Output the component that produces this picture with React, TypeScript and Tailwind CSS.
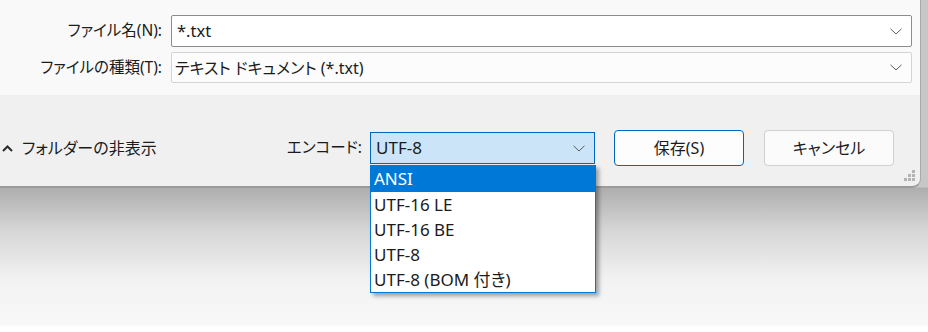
const font = "font-['Noto_Sans','Noto_Sans_CJK_JP',sans-serif] [font-feature-settings:'palt']"

const Chevron = ({ className = "" }: { className?: string }) => (
  <svg width="12" height="7" viewBox="0 0 12 7" className={className}>
    <path d="M0.5 0.8 L6 6 L11.5 0.8" fill="none" stroke="#5c5c5c" strokeWidth="1" />
  </svg>
)

const encodings = ["ANSI", "UTF-16 LE", "UTF-16 BE", "UTF-8", "UTF-8 (BOM 付き)"]

export default function App() {
  return (
    <div
      className={`${font} relative w-[928px] h-[332px] overflow-hidden text-[15.5px] text-[#1b1b1b] bg-[linear-gradient(to_bottom,#c7c7c7_0px,#c7c7c7_187px,#aeaeae_188px,#d6d6d6_230px,#f2f2f2_280px,#f8f8f8_325px,#ffffff_326px)]`}
    >
      <div className="relative w-[921px] h-[188px] flex flex-col bg-[#f0f0f0] border-r border-b-2 border-r-[#a9a9a9] border-b-[#9b9b9b] rounded-br-[9px] overflow-hidden">
        {/* file name / type */}
        <div className="h-[95px] bg-[#f9f9f9] flex flex-col pt-[15px] gap-[5px]">
          <div className="flex items-center">
            <div className="w-[171px] pr-[9px] text-right leading-none whitespace-nowrap">ファイル名(N):</div>
            <div className="w-[741px] h-[32px] bg-white border border-[#8c8c8c] rounded-[2px] flex items-center justify-between pl-[5px] pr-[9px]">
              <span className="text-[16.5px]">*.txt</span>
              <Chevron />
            </div>
          </div>
          <div className="flex items-center">
            <div className="w-[171px] pr-[9px] text-right leading-none whitespace-nowrap">ファイルの種類(T):</div>
            <div className="w-[741px] h-[31px] bg-[#fcfcfc] border border-[#d3d3d3] rounded-[2px] flex items-center justify-between pl-[3px] pr-[9px]">
              <span className="text-[16px]">テキスト ドキュメント (*.txt)</span>
              <Chevron />
            </div>
          </div>
        </div>

        {/* footer row */}
        <div className="flex-1 flex items-start pt-[35px]">
          <div className="flex items-center h-[36px] pl-[2px] w-[280px] shrink-0 whitespace-nowrap">
            <svg width="11" height="7" viewBox="0 0 11 7" className="mr-[9px]">
              <path d="M1 6 L5.5 1.5 L10 6" fill="none" stroke="#2b2b2b" strokeWidth="2" />
            </svg>
            <span className="text-[16px]">フォルダーの非表示</span>
          </div>
          <div className="flex items-center justify-end h-[36px] w-[90px] pr-[8px] shrink-0 whitespace-nowrap">エンコード:</div>
          <div className="mt-[2px] w-[225px] h-[32px] bg-[#cce4f7] border border-[#0067c0] flex items-center justify-between pl-[5px] pr-[9px]">
            <span className="text-[17px]">UTF-8</span>
            <Chevron />
          </div>
          <button className="ml-[19px] w-[130px] h-[36px] bg-[#fdfdfd] border border-[#0067c0] rounded-[4px] text-[16px]">
            保存(S)
          </button>
          <button className="ml-[20px] w-[130px] h-[36px] bg-[#fbfbfb] border border-[#d0d0d0] rounded-[4px] text-[16px]">
            キャンセル
          </button>
        </div>

        {/* resize grip */}
        <svg width="14" height="14" viewBox="0 0 14 14" className="absolute right-[3px] bottom-[3px]">
          <g fill="#b4b4b4">
            <rect x="9" y="1" width="3" height="3" />
            <rect x="5" y="5" width="3" height="3" />
            <rect x="9" y="5" width="3" height="3" />
            <rect x="1" y="9" width="3" height="3" />
            <rect x="5" y="9" width="3" height="3" />
            <rect x="9" y="9" width="3" height="3" />
          </g>
        </svg>
      </div>

      {/* dropdown list */}
      <div className="absolute left-[370px] top-[165px] w-[226px] bg-white border border-[#0078d4] shadow-[3px_3px_4px_rgba(0,0,0,0.35)] text-[17px]">
        {encodings.map((e, i) => (
          <div
            key={e}
            className={
              i === 0
                ? "h-[26px] flex items-center pl-[3px] bg-[#0078d7] text-white"
                : "h-[25px] flex items-center pl-[3px]"
            }
          >
            {e}
          </div>
        ))}
      </div>
    </div>
  )
}
